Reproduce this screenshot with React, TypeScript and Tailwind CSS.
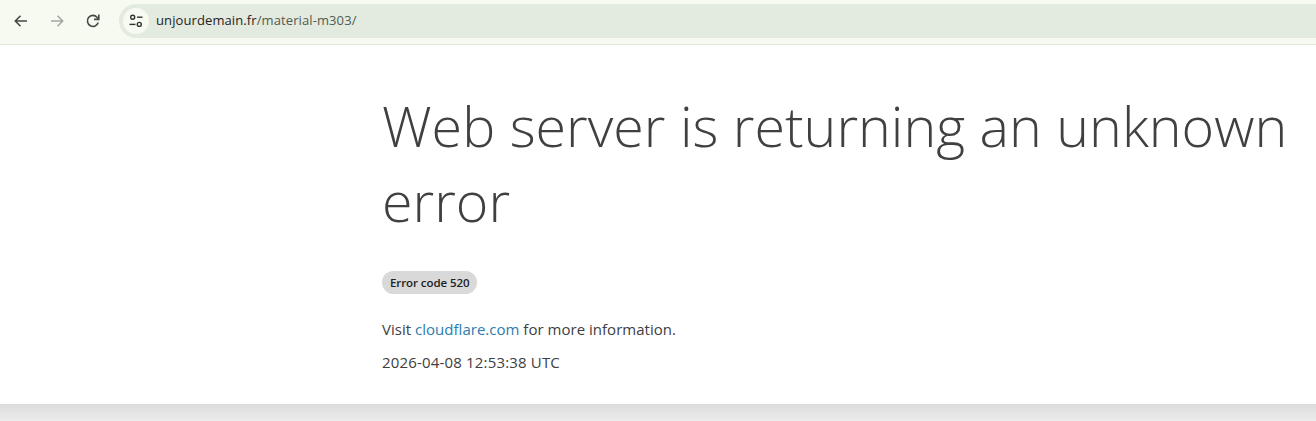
const uiFont = '"Open Sans", "Noto Sans", sans-serif';

export default function App() {
  return (
    <div className="w-[1316px] h-[421px] overflow-hidden flex flex-col bg-[#e8e8e8]" style={{ fontFamily: uiFont }}>
      {/* Browser toolbar */}
      <div className="h-[45px] shrink-0 flex items-start pt-1 bg-[#f7faf0] border-b border-[#dfe6da]">
        <div className="w-[119px] h-[34px] flex items-center pl-[12px] gap-[18px] shrink-0">
          <svg width="18" height="18" viewBox="0 0 18 18" fill="none" stroke="#444a42" strokeWidth="1.6">
            <path d="M15 9H3.5M8.5 3.8 3.3 9l5.2 5.2" />
          </svg>
          <svg width="18" height="18" viewBox="0 0 18 18" fill="none" stroke="#a3a8a0" strokeWidth="1.6">
            <path d="M3 9h11.5M9.5 3.8 14.7 9l-5.2 5.2" />
          </svg>
          <svg width="18" height="18" viewBox="0 0 18 18" fill="none" stroke="#444a42" strokeWidth="1.6">
            <path d="M14.2 10.5A5.5 5.5 0 1 1 13 5.2L14.6 7" />
            <path d="M14.8 2.6v4.8H10" />
          </svg>
        </div>
        <div className="flex-1 h-[34px] flex items-center rounded-l-[17px] bg-[#e3eadf] pl-[4px]">
          <div className="w-[26px] h-[26px] rounded-full bg-[#f7faf0] flex items-center justify-center">
            <svg width="16" height="16" viewBox="0 0 16 16" fill="none" stroke="#2f342e" strokeWidth="1.4">
              <circle cx="4.7" cy="4.2" r="2" />
              <path d="M9 4.2h5.5" />
              <circle cx="11.3" cy="11.4" r="2" />
              <path d="M1.5 11.4h6" />
            </svg>
          </div>
          <span className="ml-[7px] text-[13px] text-[#1f231e] tracking-[0.1px]">
            unjourdemain.fr<span className="text-[#525a50]">/material-m303/</span>
          </span>
        </div>
      </div>

      {/* Error page */}
      <div className="h-[359px] shrink-0 bg-white pl-[382px] pt-[43px] text-[#404040]">
        <h1 className="text-[55.6px] leading-[75px] font-light w-[925px]">
          Web server is returning an unknown error
        </h1>
        <div className="mt-[33px] inline-flex h-[23px] items-center rounded-full bg-[#d9d9d9] px-2 text-[11.5px] font-semibold tracking-[-0.08px] text-[#222]">
          Error code 520
        </div>
        <p className="mt-[23px] text-[15px] leading-[24px] tracking-[0.02px]">
          Visit <a className="text-[#2c7cb0]">cloudflare.com</a> for more information.
        </p>
        <p className="mt-[9px] text-[15px] leading-[24px] tracking-[0.17px]">2026-04-08 12:53:38 UTC</p>
      </div>

      {/* Shadow below the page */}
      <div className="flex-1 bg-gradient-to-b from-[#dcdcdc] to-[#ececec]" />
    </div>
  );
}
